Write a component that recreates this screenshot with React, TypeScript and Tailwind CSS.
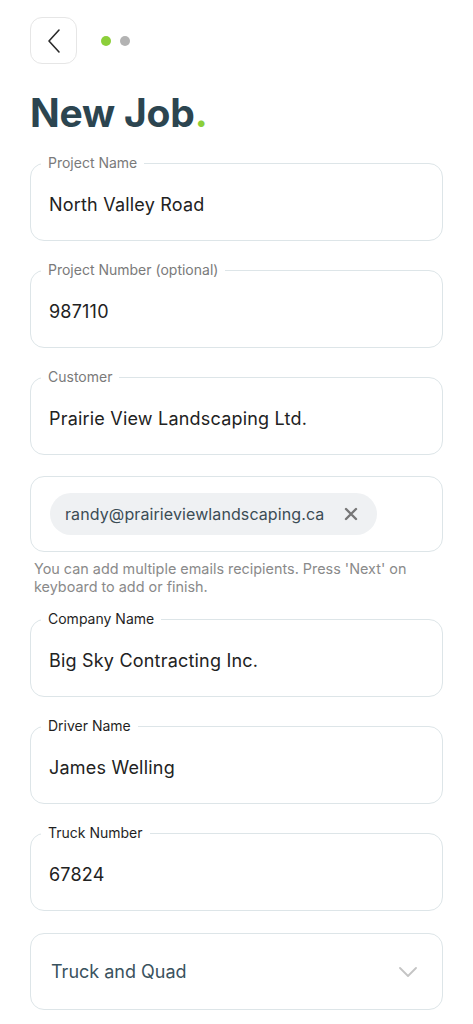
import React from "react";

const font = { fontFamily: "Inter, 'Noto Sans', sans-serif" };

function Field({ label, value, dark }: { label: string; value: string; dark?: boolean }) {
  return (
    <div className="relative h-[78px] rounded-[14px] border border-[#dde5e8] flex items-center pl-[18px] pt-[5px]">
      <span
        className={`absolute -top-[10px] left-[10px] px-[7px] bg-white text-[14px] leading-[18px] ${dark ? "text-[#1f1f1f]" : "text-[#7a7a7a]"}`}
      >
        {label}
      </span>
      <span className="text-[18px] text-[#222] tracking-[0.2px]">{value}</span>
    </div>
  );
}

export default function App() {
  return (
    <div className="bg-white min-h-[1024px] w-[473px] px-[30px] pt-[17px]" style={font}>
      <div className="flex items-center gap-[24px]">
        <div className="w-[47px] h-[47px] rounded-[12px] border border-[#e6e6e6] flex items-center justify-center">
          <svg width="16" height="26" viewBox="0 0 16 26" fill="none">
            <path d="M13 2 L3 13 L13 24" stroke="#2a2a2a" strokeWidth="1.6" strokeLinecap="round" strokeLinejoin="round" />
          </svg>
        </div>
        <div className="flex items-center gap-[9px]">
          <div className="w-[10px] h-[10px] rounded-full bg-[#8ccf3a]" />
          <div className="w-[10px] h-[10px] rounded-full bg-[#b3b3b3]" />
        </div>
      </div>

      <h1 className="mt-[26px] text-[39px] leading-[46px] font-bold text-[#2c4550] tracking-[-0.2px]">
        New Job<span className="text-[#8ccf3a]">.</span>
      </h1>

      <div className="mt-[27px] flex flex-col gap-[29px]">
        <Field label="Project Name" value="North Valley Road" />
        <Field label="Project Number (optional)" value="987110" />
        <Field label="Customer" value="Prairie View Landscaping Ltd." />
      </div>

      <div className="mt-[21px] h-[76px] rounded-[14px] border border-[#dde5e8] flex items-center pl-[19px]">
        <div className="h-[42px] rounded-full bg-[#eff1f3] flex items-center pl-[15px] pr-[19px] gap-[20px]">
          <span className="text-[16px] text-[#3b4c55] tracking-[0.1px]">randy@prairieviewlandscaping.ca</span>
          <svg width="14" height="14" viewBox="0 0 14 14">
            <path d="M2 2 L12 12 M12 2 L2 12" stroke="#777" strokeWidth="2.4" strokeLinecap="round" />
          </svg>
        </div>
      </div>
      <p className="mt-[8px] pl-[4px] pr-[6px] text-[14.4px] leading-[18px] text-[#8a8a8a]">
        You can add multiple emails recipients. Press 'Next' on keyboard to add or finish.
      </p>

      <div className="mt-[23px] flex flex-col gap-[29px]">
        <Field label="Company Name" value="Big Sky Contracting Inc." dark />
        <Field label="Driver Name" value="James Welling" dark />
        <Field label="Truck Number" value="67824" dark />
      </div>

      <div className="mt-[22px] h-[77px] rounded-[14px] border border-[#dde5e8] flex items-center justify-between pl-[20px] pr-[25px]">
        <span className="text-[18px] text-[#3a525e]">Truck and Quad</span>
        <svg width="18" height="10" viewBox="0 0 18 10" fill="none">
          <path d="M1 1 L9 9 L17 1" stroke="#c4c4c4" strokeWidth="1.8" strokeLinecap="round" strokeLinejoin="round" />
        </svg>
      </div>
    </div>
  );
}
